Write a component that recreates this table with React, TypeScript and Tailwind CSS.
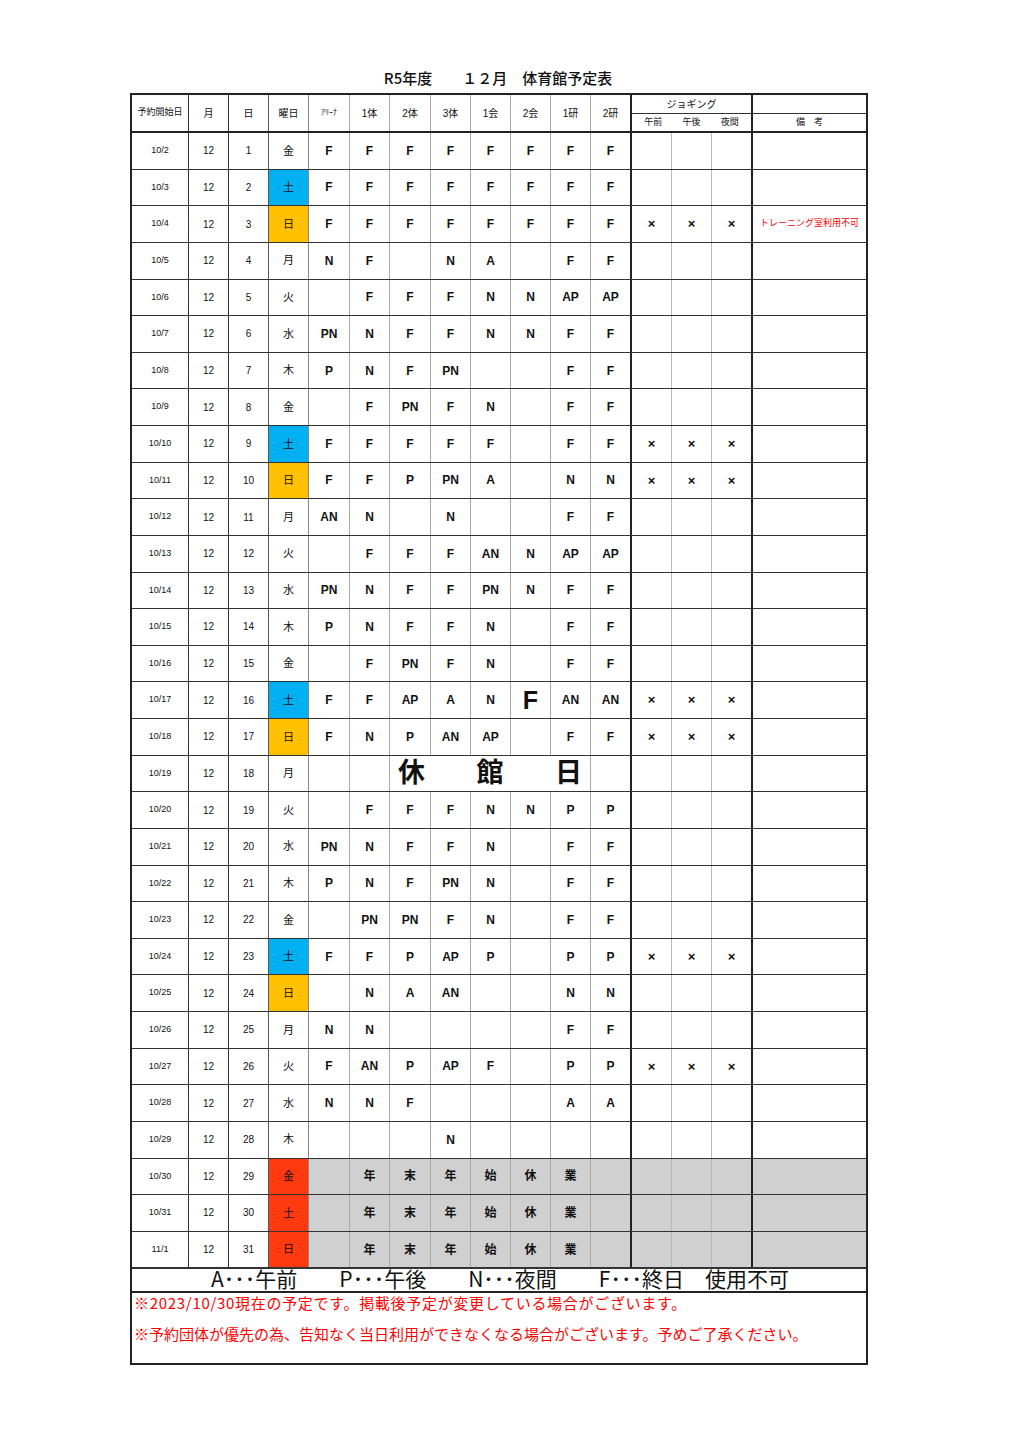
import React from "react"

type Row = {
  d: string
  day: number
  w: string
  bg?: "sat" | "sun" | "red"
  c?: string[]
  j?: boolean
  note?: string
  kind?: "closed" | "newyear"
}

const rows: Row[] = [
  { d: "10/2", day: 1, w: "金", c: ["F", "F", "F", "F", "F", "F", "F", "F"] },
  { d: "10/3", day: 2, w: "土", bg: "sat", c: ["F", "F", "F", "F", "F", "F", "F", "F"] },
  { d: "10/4", day: 3, w: "日", bg: "sun", c: ["F", "F", "F", "F", "F", "F", "F", "F"], j: true, note: "トレーニング室利用不可" },
  { d: "10/5", day: 4, w: "月", c: ["N", "F", "", "N", "A", "", "F", "F"] },
  { d: "10/6", day: 5, w: "火", c: ["", "F", "F", "F", "N", "N", "AP", "AP"] },
  { d: "10/7", day: 6, w: "水", c: ["PN", "N", "F", "F", "N", "N", "F", "F"] },
  { d: "10/8", day: 7, w: "木", c: ["P", "N", "F", "PN", "", "", "F", "F"] },
  { d: "10/9", day: 8, w: "金", c: ["", "F", "PN", "F", "N", "", "F", "F"] },
  { d: "10/10", day: 9, w: "土", bg: "sat", c: ["F", "F", "F", "F", "F", "", "F", "F"], j: true },
  { d: "10/11", day: 10, w: "日", bg: "sun", c: ["F", "F", "P", "PN", "A", "", "N", "N"], j: true },
  { d: "10/12", day: 11, w: "月", c: ["AN", "N", "", "N", "", "", "F", "F"] },
  { d: "10/13", day: 12, w: "火", c: ["", "F", "F", "F", "AN", "N", "AP", "AP"] },
  { d: "10/14", day: 13, w: "水", c: ["PN", "N", "F", "F", "PN", "N", "F", "F"] },
  { d: "10/15", day: 14, w: "木", c: ["P", "N", "F", "F", "N", "", "F", "F"] },
  { d: "10/16", day: 15, w: "金", c: ["", "F", "PN", "F", "N", "", "F", "F"] },
  { d: "10/17", day: 16, w: "土", bg: "sat", c: ["F", "F", "AP", "A", "N", "F!", "AN", "AN"], j: true },
  { d: "10/18", day: 17, w: "日", bg: "sun", c: ["F", "N", "P", "AN", "AP", "", "F", "F"], j: true },
  { d: "10/19", day: 18, w: "月", kind: "closed" },
  { d: "10/20", day: 19, w: "火", c: ["", "F", "F", "F", "N", "N", "P", "P"] },
  { d: "10/21", day: 20, w: "水", c: ["PN", "N", "F", "F", "N", "", "F", "F"] },
  { d: "10/22", day: 21, w: "木", c: ["P", "N", "F", "PN", "N", "", "F", "F"] },
  { d: "10/23", day: 22, w: "金", c: ["", "PN", "PN", "F", "N", "", "F", "F"] },
  { d: "10/24", day: 23, w: "土", bg: "sat", c: ["F", "F", "P", "AP", "P", "", "P", "P"], j: true },
  { d: "10/25", day: 24, w: "日", bg: "sun", c: ["", "N", "A", "AN", "", "", "N", "N"] },
  { d: "10/26", day: 25, w: "月", c: ["N", "N", "", "", "", "", "F", "F"] },
  { d: "10/27", day: 26, w: "火", c: ["F", "AN", "P", "AP", "F", "", "P", "P"], j: true },
  { d: "10/28", day: 27, w: "水", c: ["N", "N", "F", "", "", "", "A", "A"] },
  { d: "10/29", day: 28, w: "木", c: ["", "", "", "N", "", "", "", ""] },
  { d: "10/30", day: 29, w: "金", bg: "red", kind: "newyear" },
  { d: "10/31", day: 30, w: "土", bg: "red", kind: "newyear" },
  { d: "11/1", day: 31, w: "日", bg: "red", kind: "newyear" },
]

// facility columns: アリーナ,1体,2体,3体,1会,2会,1研,2研
const facW = ["w-[41px]", "w-[40px]", "w-[41px]", "w-[40px]", "w-[40px]", "w-[40px]", "w-[40px]", "w-[41px]"]
const facB = [
  "border-r border-[#aaa]",
  "border-r border-[#aaa]",
  "border-r border-[#aaa]",
  "border-r border-[#aaa]",
  "border-r border-[#aaa]",
  "border-r border-[#aaa]",
  "border-r border-[#aaa]",
  "border-r-2 border-[#222]",
]
const jogW = ["w-[40px]", "w-[40px]", "w-[41px]"]
const jogB = ["border-r border-[#bbb]", "border-r border-[#bbb]", "border-r-2 border-[#222]"]

const dayBg = { sat: "bg-[#00b0f0]", sun: "bg-[#ffc000]", red: "bg-[#ff3a0f]" }

const cell = "flex items-center justify-center shrink-0 h-full"
const jp = "font-['Noto_Sans_CJK_JP',sans-serif]"

function DataRow({ r }: { r: Row }) {
  const grey = r.kind === "newyear" ? "bg-[#d0d0d0]" : ""
  return (
    <div className="flex h-[36.64px] border-b border-[#333]">
      <div className={`${cell} w-[57px] border-r border-[#333] text-[9px]`}>{r.d}</div>
      <div className={`${cell} w-[40px] border-r border-[#333] text-[10px]`}>12</div>
      <div className={`${cell} w-[40px] border-r border-[#555] text-[10px]`}>{r.day}</div>
      <div className={`${cell} w-[40px] border-r border-[#888] text-[11px] ${r.bg ? dayBg[r.bg] : ""}`}>{r.w}</div>

      {r.kind === "closed" ? (
        <>
          <div className={`${cell} ${facW[0]} ${facB[0]}`} />
          <div className={`${cell} ${facW[1]} ${facB[1]}`} />
          <div className="flex items-center justify-between shrink-0 h-full w-[201px] border-r border-[#aaa] px-[8px] text-[27px] font-bold leading-none">
            <span>休</span>
            <span>館</span>
            <span>日</span>
          </div>
          <div className={`${cell} ${facW[7]} ${facB[7]}`} />
        </>
      ) : r.kind === "newyear" ? (
        facW.map((w, i) => (
          <div key={i} className={`${cell} ${w} ${facB[i]} ${grey} text-[12px] font-bold`}>
            {i >= 1 && i <= 6 ? "年末年始休業"[i - 1] : ""}
          </div>
        ))
      ) : (
        (r.c ?? []).map((v, i) => (
          <div
            key={i}
            className={`${cell} ${facW[i]} ${facB[i]} font-bold ${v === "F!" ? "text-[25px] leading-none" : "text-[12px]"}`}
          >
            {v === "F!" ? "F" : v}
          </div>
        ))
      )}

      {jogW.map((w, i) => (
        <div key={i} className={`${cell} ${w} ${jogB[i]} ${grey} text-[13px] font-bold`}>
          {r.j ? "×" : ""}
        </div>
      ))}
      <div className={`${cell} flex-1 ${grey} text-[9px] text-[#ff0000]`}>{r.note ?? ""}</div>
    </div>
  )
}

export default function App() {
  return (
    <div className="w-[1024px] min-h-[1448px] bg-white text-[#111] font-['Liberation_Sans','Noto_Sans_CJK_JP',sans-serif]">
      <div className="pt-[67px] pl-[130px] w-[868px]">
        <div className={`text-center text-[15px] leading-[21px] font-medium pr-[2px] ${jp}`}>R5年度　　１２月　体育館予定表</div>

        <div className="mt-[5px] w-[738px] border-2 border-[#222]">
          {/* header */}
          <div className="flex h-[38px] border-b-2 border-[#222] text-[10px]">
            <div className={`${cell} w-[57px] border-r border-[#333] text-[9px]`}>予約開始日</div>
            <div className={`${cell} w-[40px] border-r border-[#333]`}>月</div>
            <div className={`${cell} w-[40px] border-r border-[#555]`}>日</div>
            <div className={`${cell} w-[40px] border-r border-[#888]`}>曜日</div>
            {["ｱﾘｰﾅ", "1体", "2体", "3体", "1会", "2会", "1研", "2研"].map((t, i) => (
              <div key={t} className={`${cell} ${facW[i]} ${facB[i]} ${i === 0 ? "text-[8px]" : "text-[10px]"}`}>
                {t}
              </div>
            ))}
            <div className="flex flex-col w-[121px] shrink-0 border-r-2 border-[#222]">
              <div className="flex items-center justify-center h-[19px] border-b border-[#333] text-[10px]">ジョギング</div>
              <div className="flex flex-1 text-[9px]">
                <div className="flex-1 flex items-center justify-center pl-[2px]">午前</div>
                <div className="flex-1 flex items-center justify-center">午後</div>
                <div className="flex-1 flex items-center justify-center pr-[2px]">夜間</div>
              </div>
            </div>
            <div className="flex flex-col flex-1">
              <div className="h-[19px] border-b border-[#333]" />
              <div className="flex flex-1 items-center justify-center text-[9px]">備　考</div>
            </div>
          </div>

          {rows.map((r) => (
            <DataRow key={r.d} r={r} />
          ))}

          {/* legend */}
          <div className={`flex items-center justify-center h-[25px] border-t border-[#333] border-b-2 border-b-[#222] text-[21px] leading-none pl-[2px] pb-[3px] ${jp}`}>
            A･･･午前　　P･･･午後　　N･･･夜間　　F･･･終日　使用不可
          </div>
          <div className={`h-[70px] text-[15px] text-[#ff0000] leading-none pl-[2px] ${jp}`}>
            <div className="pt-[2px] tracking-[0.7px]">※2023/10/30現在の予定です。掲載後予定が変更している場合がございます。</div>
            <div className="pt-[16px]">※予約団体が優先の為、告知なく当日利用ができなくなる場合がございます。予めご了承ください。</div>
          </div>
        </div>
      </div>
    </div>
  )
}
